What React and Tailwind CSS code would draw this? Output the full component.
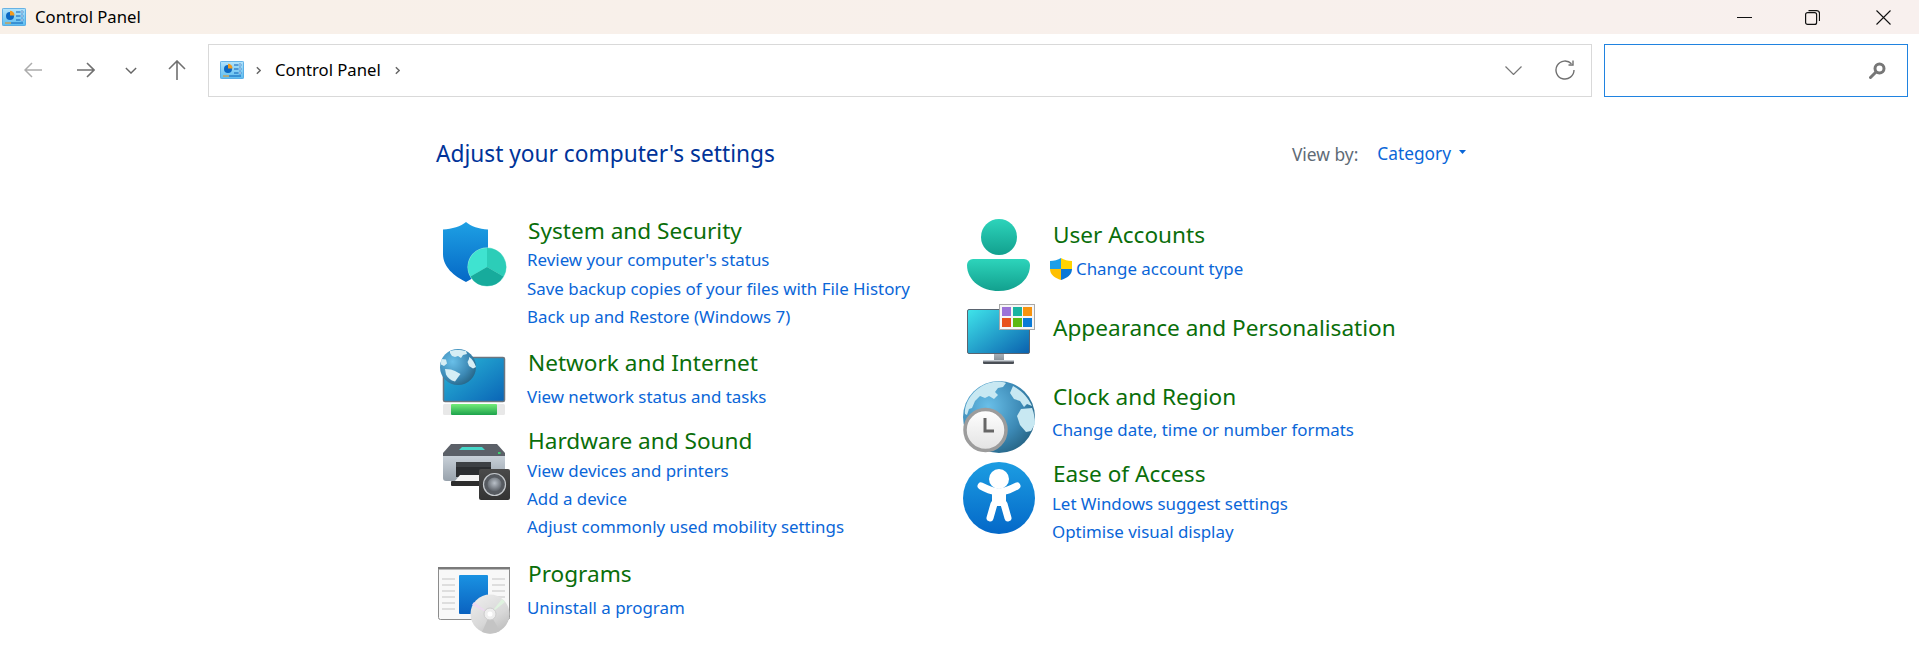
import React from "react";

const titleCls = "block h-[30px] leading-[30px] text-[22.6px] text-[#0a6e0a] whitespace-nowrap";
const linkCls = "block h-[28px] leading-[28px] -ml-[1px] text-[16.9px] text-[#0a66d8] whitespace-nowrap";

function Cp({ className }) {
  return (
    <svg viewBox="0 0 24 18" className={className}>
      <defs>
        <linearGradient id="cpbg" x1="0" y1="0" x2="0" y2="1">
          <stop offset="0" stopColor="#b4e4fb" />
          <stop offset="1" stopColor="#5bbcf0" />
        </linearGradient>
      </defs>
      <rect x="0.4" y="0.4" width="23.2" height="17.2" rx="1" fill="url(#cpbg)" stroke="#3a9ade" strokeWidth="0.8" />
      <circle cx="8" cy="8" r="4" fill="#0b67c2" />
      <path d="M8 7.5V2.8A4.6 4.6 0 0 1 12.6 7.5Z" fill="#f29a1e" />
      <path d="M14 4h4M14 8h4M14 12h4" stroke="#0b5fb5" strokeWidth="1" />
      <circle cx="20" cy="4" r="1.2" fill="#fff" stroke="#0b5fb5" strokeWidth="0.6" />
      <circle cx="20" cy="8" r="1.2" fill="#fff" stroke="#0b5fb5" strokeWidth="0.6" />
      <circle cx="20" cy="12" r="1.2" fill="#fff" stroke="#0b5fb5" strokeWidth="0.6" />
      <path d="M3 15h6" stroke="#ef8f15" strokeWidth="1" />
      <path d="M9 15h12" stroke="#0b5fb5" strokeWidth="1" />
    </svg>
  );
}

function Grad({ id, a, b, x2 = 0, y2 = 1 }) {
  return (
    <linearGradient id={id} x1="0" y1="0" x2={x2} y2={y2}>
      <stop offset="0" stopColor={a} />
      <stop offset="1" stopColor={b} />
    </linearGradient>
  );
}

const svgCls = "w-[72px] h-[72px] shrink-0 overflow-visible";

function Security() {
  return (
    <svg viewBox="0 0 72 72" className={svgCls}>
      <defs><Grad id="sh" a="#1ea0e4" b="#0568c6" /></defs>
      <path d="M28 6c5 4.5 13 7 22 7.5V38c0 13-10 22-22 28C16 60 5 51 5 38V13.5C14 13 23 10.5 28 6z" fill="url(#sh)" />
      <circle cx="49" cy="51" r="19.5" fill="#9be8dc" />
      <path d="M49 51V32A19 19 0 0 0 32.5 60.5Z" fill="#3fe3d0" />
      <path d="M49 51V32A19 19 0 0 1 65.5 60.5Z" fill="#2ccdb8" />
      <path d="M49 51L65.5 60.5A19 19 0 0 1 32.5 60.5Z" fill="#17ab9c" />
    </svg>
  );
}

function GlobeArt({ id, cx, cy, r, small }) {
  const s = r / 36;
  return (
    <g transform={`translate(${cx - 36 * s} ${cy - 36 * s}) scale(${s})`}>
      <defs>
        <radialGradient id={id} cx="0.35" cy="0.35" r="0.85">
          <stop offset="0" stopColor="#69bfe8" />
          <stop offset="0.55" stopColor="#3c89b5" />
          <stop offset="1" stopColor="#1c5470" />
        </radialGradient>
      </defs>
      <circle cx="36" cy="36" r="36" fill={`url(#${id})`} />
      {small ? (
        <g fill="#d6eef5">
          <path d="M20 4c8-3 22-3 32 0l2 6-8 2-4 6-6-4-6 2-6-2-4-6z" />
          <path d="M58 16c7 4 11 12 14 20l-6 3-8-5-3-8 3-6z" />
          <path d="M10 40l12 1 8 3 11 6-6 8-5 7c-9-2-15-8-18-14z" />
          <path d="M3 20l9 1 2 8-6 5-6-3c0-4 0-7 1-11z" />
        </g>
      ) : (
        <g fill="#c8e8f2">
          <path d="M26 2c6-2 12-2 17 0l-3 4-5 1-3 4 3 3-4 4-5-3-4 2-5-2-5 5-3 7-3 1-2 6-2-1C1 22 10 7 26 2z" />
          <path d="M50 5c8 4 15 11 19 20l-5-2-3 3-4-6-6-2-4-6 3-7z" />
          <path d="M58 28l11-1c2 5 3 10 3 16l-4 7-5 1-6-7-3-9z" />
        </g>
      )}
    </g>
  );
}

function Network() {
  return (
    <svg viewBox="0 0 72 72" className={svgCls}>
      <defs>
        <Grad id="nm" a="#2bbad9" b="#0a64b6" x2="1" />
        <Grad id="ng" a="#74ec78" b="#1da24c" />
      </defs>
      <rect x="5.5" y="9.5" width="61" height="44" rx="1.5" fill="url(#nm)" stroke="#6c7680" strokeWidth="1.5" />
      <rect x="5" y="56" width="9" height="11" rx="1.5" fill="#e8e8e8" />
      <rect x="58" y="56" width="9" height="11" rx="1.5" fill="#e8e8e8" />
      <rect x="13" y="56" width="46" height="11" rx="1" fill="url(#ng)" />
      <GlobeArt id="g1" cx={20} cy={19} r={18} small />
    </svg>
  );
}

function Hardware() {
  return (
    <svg viewBox="0 0 72 72" className={svgCls}>
      <defs>
        <Grad id="pb" a="#c8d0d8" b="#98a2ac" />
        <Grad id="sp" a="#4a4a4a" b="#333333" />
        <radialGradient id="cn" cx="0.5" cy="0.4" r="0.6">
          <stop offset="0" stopColor="#b9c0c8" />
          <stop offset="1" stopColor="#5a5f66" />
        </radialGradient>
      </defs>
      <path d="M13 18H59L67 27V30H5V27Z" fill="#5b6068" />
      <path d="M21 24L24 21H44L47 24Z" fill="#45d6c8" />
      <rect x="60" y="26" width="2.5" height="2" fill="#3fd070" />
      <path d="M5 30H67V52a3 3 0 0 1-3 3H8a3 3 0 0 1-3-3Z" fill="url(#pb)" />
      <rect x="18" y="36" width="35" height="15" fill="#2b2d30" />
      <rect x="18" y="36" width="35" height="5" fill="#3d4044" />
      <path d="M17 55L22 49H50V55Z" fill="#f4f4f4" />
      <rect x="13" y="55" width="34" height="5" rx="1" fill="#2d2d2d" />
      <rect x="41" y="43" width="31" height="31" rx="2" fill="url(#sp)" />
      <circle cx="56.5" cy="58.5" r="11" fill="#565a60" stroke="#c4c8cc" strokeWidth="1.2" />
      <circle cx="56.5" cy="58.5" r="7" fill="url(#cn)" />
    </svg>
  );
}

function Programs() {
  const ys = [20, 26, 32, 38, 44, 50];
  return (
    <svg viewBox="0 0 72 72" className={svgCls}>
      <defs>
        <Grad id="pg" a="#1a92e2" b="#0a62c0" />
        <linearGradient id="dc" x1="0.2" y1="0" x2="0.8" y2="1">
          <stop offset="0" stopColor="#ececec" />
          <stop offset="0.6" stopColor="#d8d8d8" />
          <stop offset="1" stopColor="#bcbcbc" />
        </linearGradient>
      </defs>
      <rect x="0.5" y="8.5" width="71" height="52" rx="2" fill="#f8f8f8" stroke="#8c8c8c" />
      <rect x="0" y="8" width="72" height="2.5" fill="#7a7a7a" />
      {ys.map((y) => (
        <g key={y} stroke="#c4c4c4">
          <path d={`M4 ${y}H17`} />
          <path d={`M54 ${y}H67`} />
        </g>
      ))}
      <rect x="21" y="16" width="29" height="39" rx="1" fill="url(#pg)" />
      <circle cx="52" cy="55" r="19.5" fill="url(#dc)" />
      <path d="M52 55L34 46A20 20 0 0 1 36 43Z" fill="#ecd8f0" />
      <path d="M52 55L64 40A20 20 0 0 1 67 43Z" fill="#dff2df" />
      <path d="M52 55L44 73A20 20 0 0 0 62 72Z" fill="#c4c4c4" />
      <circle cx="52" cy="55" r="6" fill="#eeeeee" stroke="#cccccc" />
      <circle cx="52" cy="55" r="2.5" fill="#ffffff" />
    </svg>
  );
}

function User() {
  return (
    <svg viewBox="0 0 72 72" className={svgCls}>
      <defs>
        <Grad id="u1" a="#2dd4bb" b="#12a08e" />
        <Grad id="u2" a="#2dd4bb" b="#12a08e" />
      </defs>
      <circle cx="36" cy="18" r="18" fill="url(#u1)" />
      <path d="M10 40H61a6 6 0 0 1 6 6C67 62 52 72 35.5 72 19 72 4 62 4 46a6 6 0 0 1 6-6Z" fill="url(#u2)" />
    </svg>
  );
}

function Appearance() {
  const sw = [
    [39, 3, "#9b72d8"], [50, 3, "#1ab3a0"], [60, 3, "#f7930e"],
    [39, 14, "#e8501a"], [50, 14, "#5cb811"], [60, 14, "#0a7bd8"],
  ];
  return (
    <svg viewBox="0 0 72 72" className={svgCls}>
      <defs>
        <Grad id="am" a="#3fe4ea" b="#0a60ae" x2="1" />
        <Grad id="as" a="#a8b0b8" b="#7e8890" />
      </defs>
      <rect x="4.5" y="5.5" width="62" height="44" rx="1.5" fill="url(#am)" stroke="#5a6470" />
      <rect x="31" y="50" width="10" height="8" fill="url(#as)" />
      <rect x="20" y="56" width="31" height="4" rx="1" fill="#4a4f56" />
      <rect x="20" y="56" width="31" height="1.5" fill="#c6ccd2" />
      <rect x="36.5" y="0.5" width="35" height="25" fill="#f6f6f6" stroke="#a8a8a8" />
      {sw.map(([x, y, c]) => (
        <rect key={c} x={x} y={y} width="9" height="9" fill={c} />
      ))}
    </svg>
  );
}

function Clock() {
  return (
    <svg viewBox="0 0 72 72" className={svgCls}>
      <defs><Grad id="cf" a="#ffffff" b="#e2e2e2" /></defs>
      <GlobeArt id="g2" cx={36} cy={36} r={36} />
      <circle cx="22.5" cy="49" r="20.5" fill="url(#cf)" stroke="#9c9c9c" strokeWidth="3.5" />
      <path d="M22 37V50H31" fill="none" stroke="#666" strokeWidth="3" />
    </svg>
  );
}

function Ease() {
  return (
    <svg viewBox="0 0 72 72" className={svgCls}>
      <defs><Grad id="ea" a="#1c9de2" b="#0468c8" /></defs>
      <circle cx="36" cy="36" r="36" fill="url(#ea)" />
      <circle cx="36" cy="17" r="10" fill="#fff" />
      <path d="M18 24C26 28 30 30 36 30S46 28 54 24" fill="none" stroke="#fff" strokeWidth="7" strokeLinecap="round" />
      <path d="M29 30H43L43 44H29Z" fill="#fff" />
      <path d="M31 42L27 56M41 42L45 56" fill="none" stroke="#fff" strokeWidth="7" strokeLinecap="round" />
    </svg>
  );
}

function UacShield() {
  return (
    <svg viewBox="0 0 22 22" className="w-[22px] h-[22px] shrink-0 -ml-[3px] mr-[5px]">
      <path d="M11 0C14 2 18 3 22 3V11H11Z" fill="#ffd400" />
      <path d="M11 0C8 2 4 3 0 3V11H11Z" fill="#1d9fe8" />
      <path d="M0 11H11V22C5 20 0 17 0 11Z" fill="#ffc000" />
      <path d="M22 11H11V22C17 20 22 17 22 11Z" fill="#0a78d6" />
    </svg>
  );
}

function Row({ h, Icon, iconCls = "", children }) {
  return (
    <div className={`flex gap-[18px] ${h}`}>
      <div className={iconCls}><Icon /></div>
      <div>{children}</div>
    </div>
  );
}

function A({ children, cls = "" }) {
  return <a className={`${linkCls} ${cls}`}>{children}</a>;
}

function T({ children, cls = "" }) {
  return <h2 className={`${titleCls} ${cls}`}>{children}</h2>;
}

export default function App() {
  return (
    <div className="w-[1919px] h-[657px] bg-white overflow-hidden font-['Noto_Sans',sans-serif]">
      <div className="h-[34px] flex items-center bg-[linear-gradient(90deg,#f8f0e8,#f8f0ee)]">
        <Cp className="w-[24px] h-[18px] ml-[2px]" />
        <span className="ml-[9px] text-[16.7px] text-black">Control Panel</span>
        <div className="ml-auto flex items-center pr-[28px]">
          <svg viewBox="0 0 15 15" className="w-[15px] h-[15px]"><path d="M0 7.5H15" stroke="#111" strokeWidth="1" /></svg>
          <svg viewBox="0 0 15 15" className="w-[15px] h-[15px] ml-[53px]" fill="none" stroke="#111" strokeWidth="1.2">
            <rect x="0.6" y="2.6" width="11" height="11.8" rx="2" />
            <path d="M3.5 0.6H11.5a3 3 0 0 1 3 3V11" />
          </svg>
          <svg viewBox="0 0 15 15" className="w-[15px] h-[15px] ml-[56px]"><path d="M0.5 0.5L14.5 14.5M14.5 0.5L0.5 14.5" stroke="#111" strokeWidth="1.1" /></svg>
        </div>
      </div>

      <div className="h-[72px] flex items-center pl-[24px] pr-[11px] bg-white">
        <svg viewBox="0 0 18 16" className="w-[18px] h-[16px]" fill="none" stroke="#acacac" strokeWidth="1.5"><path d="M18 8H1M8 1L1 8L8 15" /></svg>
        <svg viewBox="0 0 18 16" className="w-[18px] h-[16px] ml-[35px]" fill="none" stroke="#707070" strokeWidth="1.6"><path d="M0 8H17M10 1L17 8L10 15" /></svg>
        <svg viewBox="0 0 14 8" className="w-[12px] h-[7px] ml-[30px]" fill="none" stroke="#666" strokeWidth="1.6"><path d="M1 1L7 7L13 1" /></svg>
        <svg viewBox="0 0 18 20" className="w-[18px] h-[20px] ml-[31px]" fill="none" stroke="#707070" strokeWidth="1.6"><path d="M9 20V1M1 9L9 1L17 9" /></svg>

        <div className="ml-[22px] flex-1 h-[53px] flex items-center border border-[#d9d9d9] pl-[11px] pr-[16px]">
          <Cp className="w-[24px] h-[18px]" />
          <svg viewBox="0 0 6 10" className="w-[5px] h-[9px] ml-[12px]" fill="none" stroke="#666" strokeWidth="1.7"><path d="M1 1L5 5L1 9" /></svg>
          <span className="ml-[14px] text-[16.7px] text-black">Control Panel</span>
          <svg viewBox="0 0 6 10" className="w-[5px] h-[9px] ml-[14px]" fill="none" stroke="#666" strokeWidth="1.7"><path d="M1 1L5 5L1 9" /></svg>
          <svg viewBox="0 0 17 9" className="w-[17px] h-[9px] ml-auto" fill="none" stroke="#777" strokeWidth="1.2"><path d="M0.5 0.5L8.5 8.5L16.5 0.5" /></svg>
          <svg viewBox="0 0 20 20" className="w-[20px] h-[20px] ml-[33px]" fill="none" stroke="#707070" strokeWidth="1.4">
            <path d="M16.5 3.8A9 9 0 1 0 19 10" />
            <path d="M18 0.5V5H13.5" />
          </svg>
        </div>

        <div className="ml-[12px] w-[304px] h-[53px] flex items-center justify-end border border-[#2083e0] pr-[21px]">
          <svg viewBox="0 0 17 17" className="w-[17px] h-[17px]" fill="none" stroke="#777">
            <circle cx="10.5" cy="6.5" r="4.5" strokeWidth="3" />
            <path d="M7 10L1.5 15.5" strokeWidth="3" strokeLinecap="round" />
          </svg>
        </div>
      </div>

      <div className="pt-[33px] pl-[436px]">
        <div className="w-[1030px] h-[30px] flex items-center">
          <h1 className="text-[22.7px] text-[#003399]">Adjust your computer's settings</h1>
          <span className="ml-auto text-[17.4px] text-[#5f6b76]">View by:</span>
          <span className="ml-[19px] text-[17.3px] text-[#0a66d8]">Category</span>
          <svg viewBox="0 0 7 4" className="w-[7px] h-[4px] ml-[8px] -mt-[4px]"><path d="M0 0H7L3.5 4Z" fill="#0a66d8" /></svg>
        </div>

        <div className="flex pl-[2px]">
          <div className="w-[525px] pt-[47px]">
            <Row h="h-[132px]" Icon={Security}>
              <T>System and Security</T>
              <A cls="mb-[1px]">Review your computer's status</A>
              <A>Save backup copies of your files with File History</A>
              <A>Back up and Restore (Windows 7)</A>
            </Row>
            <Row h="h-[78px]" Icon={Network}>
              <T>Network and Internet</T>
              <A cls="mt-[5px]">View network status and tasks</A>
            </Row>
            <Row h="h-[133px]" Icon={Hardware}>
              <T>Hardware and Sound</T>
              <A cls="mt-[1px]">View devices and printers</A>
              <A>Add a device</A>
              <A>Adjust commonly used mobility settings</A>
            </Row>
            <Row h="h-[72px]" Icon={Programs}>
              <T>Programs</T>
              <A cls="mt-[5px]">Uninstall a program</A>
            </Row>
          </div>

          <div className="pt-[50px]">
            <Row h="h-[85px]" Icon={User}>
              <T cls="mt-[1px]">User Accounts</T>
              <div className="flex items-center mt-[5px]">
                <UacShield />
                <A>Change account type</A>
              </div>
            </Row>
            <Row h="h-[77px]" Icon={Appearance}>
              <T cls="mt-[9px]">Appearance and Personalisation</T>
            </Row>
            <Row h="h-[77px]" Icon={Clock}>
              <T cls="mt-[1px]">Clock and Region</T>
              <A cls="mt-[4px]">Change date, time or number formats</A>
            </Row>
            <Row h="h-[90px]" Icon={Ease} iconCls="mt-[4px]">
              <T cls="mt-[1px]">Ease of Access</T>
              <A cls="mt-[1px]">Let Windows suggest settings</A>
              <A>Optimise visual display</A>
            </Row>
          </div>
        </div>
      </div>
    </div>
  );
}
